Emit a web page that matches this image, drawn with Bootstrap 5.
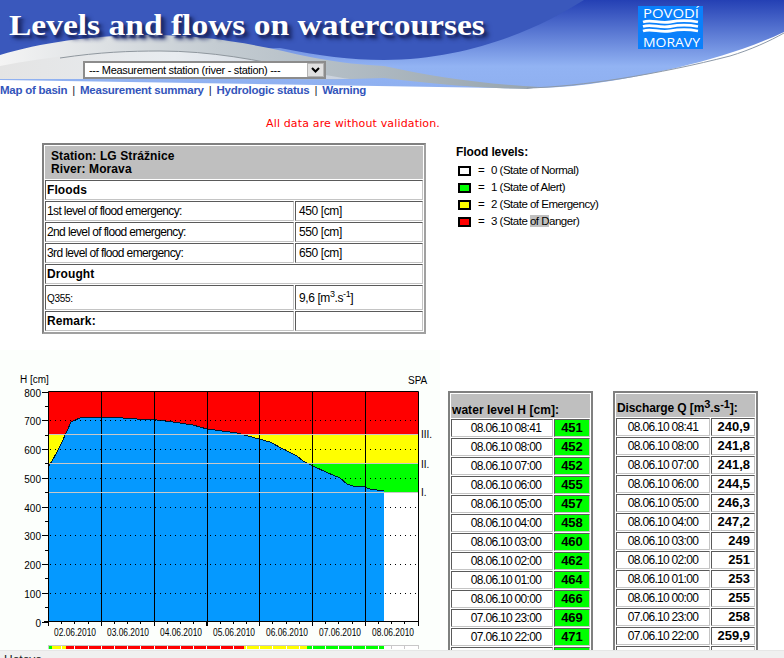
<!DOCTYPE html>
<html lang="en">
<head>
<meta charset="UTF-8">
<meta name="viewport" content="width=device-width, initial-scale=1.0">
<title>Levels and flows on watercourses</title>
<link href="https://cdn.jsdelivr.net/npm/bootstrap@5.3.0/dist/css/bootstrap.min.css" rel="stylesheet">
<style>
html, body { height: 100%; overflow: hidden; }
body { background: #fff; color: #000; font-family: "Liberation Sans", Arial, sans-serif; font-size: 12px; }
.page-wrap { position: relative; height: 658px; overflow: hidden; }
.banner-art { position: absolute; left: 0; top: 0; z-index: 0; }
.banner-flow { position: relative; z-index: 1; height: 81px; }
.banner-title { font-family: "Liberation Serif", "Times New Roman", serif; font-weight: 700; font-size: 30px; line-height: 34px; color: #fff; margin: 0; padding: 8px 0 0 8px; text-shadow: 2px 3px 2px #1c2a6a, 4px 4px 4px #1c2a6a; white-space: nowrap; transform: scaleX(1.117); transform-origin: left top; }
.station-pick { width: 243px; height: 18px; margin: 19px 0 0 83px; padding: 0 18px 0 4px; border: 2px solid #8c8c8c; border-radius: 0; font-family: "Liberation Sans", Arial, sans-serif; font-size: 11px; letter-spacing: -.3px; line-height: 14px; color: #000; background-color: #fff; background-repeat: no-repeat; background-size: 17px 14px; background-position: right 0 center; background-image: url("data:image/svg+xml,%3Csvg xmlns='http://www.w3.org/2000/svg' viewBox='0 0 17 14'%3E%3Crect width='17' height='14' fill='%23b4b4b4'/%3E%3Crect x='1' y='1' width='15' height='12' fill='%23e0e0e0'/%3E%3Cpath d='M5 5l3.500 3.500L12 5' fill='none' stroke='%23000' stroke-width='2'/%3E%3C/svg%3E"); }
.top-links { position: relative; z-index: 1; height: 18px; line-height: 18px; font-family: "Liberation Sans", Arial, sans-serif; font-size: 11.500px; font-weight: 700; letter-spacing: -.25px; white-space: nowrap; color: #223; }
.top-links a { color: #3355bb; text-decoration: none; }
.top-links .sep { display: inline-block; margin: 0 5px; font-weight: 400; }
.no-valid { position: relative; font-family: "DejaVu Sans", Verdana, sans-serif; font-size: 11px; letter-spacing: .15px; color: #f00; text-align: left; padding-left: 266px; height: 18px; line-height: 18px; margin-top: 16px; }

.old-table { border-collapse: separate; border-spacing: 1px; border: 1px solid #808080; background: #fff; }
.old-table td { border: 1px solid; border-color: #5a5a5a #c4c4c4 #c4c4c4 #5a5a5a; padding: 0 0 0 1px; vertical-align: middle; letter-spacing: -.62px; font-size: 12px; }
.old-table td.head-cell { background: #bfbfbf; border-color: #bfbfbf; font-weight: 700; letter-spacing: .1px; vertical-align: middle; }
.old-table td.sect-cell { font-weight: 700; letter-spacing: .1px; }

.info-zone { margin-top: 10px; height: 207px; }
.station-table { width: 384px; margin-left: 42px; border-width: 2px; border-color: #808080 #a0a0a0 #a0a0a0 #808080; }
.station-table td { height: 20px; }
.station-table .head-cell { height: 33px; padding-left: 5px; line-height: 13px; }
.station-table .val-col { width: 128px; padding-left: 3px; letter-spacing: -.4px; }
.station-table .tall-row td { height: 25px; }
.small-sub { font-size: 10px; letter-spacing: -.3px; }
.flood-legend { margin-left: 30px; padding-top: 2px; font-size: 11.500px; letter-spacing: -.5px; }
.flood-legend .leg-title { font-weight: 700; font-size: 12px; letter-spacing: -.1px; line-height: 15px; margin-bottom: 2px; }
.leg-row { height: 17px; line-height: 17px; white-space: nowrap; padding-left: 2px; }
.leg-swatch { width: 13px; height: 10px; border: 2px solid #000; flex: none; }
.leg-eq { width: 20px; text-align: center; flex: none; }
.leg-picked { background: #c0c0c0; }

.lower-zone { height: 307px; }
.chart-box { width: 440px; height: 307px; background: #fcfffc; flex: none; }
.chart-box svg { display: block; }
.chart-box text { font-family: "Liberation Sans", Arial, sans-serif; font-size: 10px; fill: #000; }
.reading-col { padding-top: 41px; margin-left: 8px; }
.reading-table { border-width: 2px; border-color: #808080; width: 145px; }
.reading-table td { height: 18px; line-height: 14px; font-size: 12px; text-align: center; letter-spacing: -.7px; padding: 0 0 0 8px; white-space: nowrap; }
.reading-table td.head-cell { height: 24px; text-align: left; padding-left: 0; font-size: 12px; letter-spacing: .05px; vertical-align: bottom; white-space: nowrap; }
.reading-table td.num-cell { width: 36px; padding-left: 0; font-weight: 700; font-size: 13px; letter-spacing: 0; }
.reading-table td.level-ok { background: #00ff00; }
.flow-table { margin-left: 20px; }
.flow-table td { padding-left: 0; }
.flow-table td.flow-cell { width: 44px; text-align: right; padding-right: 4px; }
.flow-table td.head-cell { height: 23px; line-height: 12px; padding-bottom: 2px; letter-spacing: -.1px; }
.flow-table td.head-cell sup { font-size: 11px; top: -.4em; }

.status-strip { position: absolute; left: 0; right: 0; top: 650px; height: 8px; background: #f0f0f0; border-top: 1px solid #e6e6e6; overflow: hidden; font-size: 12px; line-height: 14px; padding: 2px 0 0 4px; color: #222; }
</style>
</head>
<body>
<div class="page-wrap">
    <svg class="banner-art" width="784" height="92" viewBox="0 0 784 92">
        <defs>
            <linearGradient id="skyGrad" x1="0" y1="0" x2="0" y2="1">
                <stop offset="0" stop-color="#2440b4"/>
                <stop offset=".75" stop-color="#92b3f3"/>
                <stop offset="1" stop-color="#8fb0f0"/>
            </linearGradient>
            <linearGradient id="swooshGrad" x1="0" y1="0" x2="1" y2="0">
                <stop offset="0" stop-color="#f4f4f4"/>
                <stop offset=".4" stop-color="#c4ccd2"/>
                <stop offset="1" stop-color="#96a4ae"/>
            </linearGradient>
            <linearGradient id="lowGrad" x1="0" y1="0" x2="1" y2="0">
                <stop offset="0" stop-color="#e4e4e4"/>
                <stop offset=".5" stop-color="#e8ecf0"/>
                <stop offset="1" stop-color="#c8d0dc"/>
            </linearGradient>
        </defs>
        <path d="M0 0H784V32C730 58 650 76 590 84C560 88 530 89 500 88L0 80Z" fill="url(#skyGrad)"/>
        <path d="M0 0H584C540 28 470 60 384 60C350 60 320 56 280 48L0 60Z" fill="#3a58bc"/>
        <path d="M0 55C40 43 90 35 150 35C215 35 265 47 310 57C340 63 365 65 384 66C430 76 480 84 540 87L527 89C470 88 420 82 384 78C340 80 300 79 280 79H0Z" fill="url(#swooshGrad)"/>
        <path d="M0 79V66C50 56 105 51 160 51C210 51 260 60 300 70C320 74 335 77 350 79Z" fill="url(#lowGrad)"/>
        <path d="M60 58C100 52 130 51 160 51C210 51 260 60 300 70" fill="none" stroke="#8f979e" stroke-width="1"/>
        <path d="M527 88C580 87 660 74 730 56C750 50 770 41 784 33" fill="none" stroke="#8d99a8" stroke-width="1"/>
        <rect x="638" y="6" width="65" height="43" fill="#0a80fb"/>
        <text x="643" y="18" textLength="56" lengthAdjust="spacingAndGlyphs" font-family="Open Sans" font-size="12.500" fill="#fff">POVODÍ</text>
        <path d="M643 22C652 19 659 24 670 22C680 20 688 20 698 22M643 26.500C652 23.500 659 28.500 670 26.500C680 24.500 688 24.500 698 26.500M643 31C652 28 659 33 670 31C680 29 688 29 698 31" fill="none" stroke="#fff" stroke-width="2.800"/>
        <text x="643" y="47" textLength="57" lengthAdjust="spacingAndGlyphs" font-family="Open Sans" font-size="12.500" fill="#fff">MORAVY</text>
    </svg>

    <div class="banner-flow">
        <h1 class="banner-title">Levels and flows on watercourses</h1>
        <select class="form-select station-pick">
            <option>--- Measurement station (river - station) ---</option>
        </select>
    </div>

    <div class="top-links">
        <a href="#">Map of basin</a><span class="sep">|</span><a href="#">Measurement summary</a><span class="sep">|</span><a href="#">Hydrologic status</a><span class="sep">|</span><a href="#">Warning</a>
    </div>

    <div class="no-valid">All data are without validation.</div>

    <div class="info-zone d-flex align-items-start">
        <table class="old-table station-table">
            <tr><td class="head-cell" colspan="2">Station: LG Strážnice<br>River: Morava</td></tr>
            <tr><td class="sect-cell" colspan="2">Floods</td></tr>
            <tr><td>1st level of flood emergency:</td><td class="val-col">450 [cm]</td></tr>
            <tr><td>2nd level of flood emergency:</td><td class="val-col">550 [cm]</td></tr>
            <tr><td>3rd level of flood emergency:</td><td class="val-col">650 [cm]</td></tr>
            <tr><td class="sect-cell" colspan="2">Drought</td></tr>
            <tr class="tall-row"><td><span class="small-sub">Q355:</span></td><td class="val-col">9,6 [m<sup>3</sup>.s<sup>-1</sup>]</td></tr>
            <tr><td class="sect-cell">Remark:</td><td class="val-col"></td></tr>
        </table>
        <div class="flood-legend">
            <div class="leg-title">Flood levels:</div>
            <div class="leg-row d-flex align-items-center"><span class="leg-swatch" style="background:#fff"></span><span class="leg-eq">=</span><span>0 (State of Normal)</span></div>
            <div class="leg-row d-flex align-items-center"><span class="leg-swatch" style="background:#0f0"></span><span class="leg-eq">=</span><span>1 (State of Alert)</span></div>
            <div class="leg-row d-flex align-items-center"><span class="leg-swatch" style="background:#ff0"></span><span class="leg-eq">=</span><span>2 (State of Emergency)</span></div>
            <div class="leg-row d-flex align-items-center"><span class="leg-swatch" style="background:#f00"></span><span class="leg-eq">=</span><span>3 (State <span class="leg-picked">of D</span>anger)</span></div>
        </div>
    </div>

    <div class="lower-zone d-flex">
        <div class="chart-box">
            <svg id="chart" width="440" height="307" viewBox="0 351 440 307">
                <rect x="48" y="392.500" width="370" height="43" fill="#f00"/>
                <rect x="48" y="435" width="370" height="29" fill="#ff0"/>
                <rect x="48" y="464" width="370" height="29" fill="#0f0"/>
                <rect x="48" y="493" width="370" height="129" fill="#fff"/>
                <path id="water" fill="#0599ff" stroke="none" shape-rendering="crispEdges"/>
                <path id="waterEdge" fill="none" stroke="#001a30" stroke-width="1" shape-rendering="crispEdges"/>
                <g id="gridPart"></g>
                <text x="20" y="384">H [cm]</text>
                <text x="408" y="385">SPA</text>
                <text x="421" y="439">III.</text>
                <text x="421" y="469">II.</text>
                <text x="421" y="497">I.</text>
            </svg>
        </div>
        <div class="reading-col d-flex align-items-start">
            <table class="old-table reading-table">
                <tr><td class="head-cell" colspan="2"><b>water level H [cm]:</b></td></tr>
                <tr><td>08.06.10 08:41</td><td class="num-cell level-ok">451</td></tr>
                <tr><td>08.06.10 08:00</td><td class="num-cell level-ok">452</td></tr>
                <tr><td>08.06.10 07:00</td><td class="num-cell level-ok">452</td></tr>
                <tr><td>08.06.10 06:00</td><td class="num-cell level-ok">455</td></tr>
                <tr><td>08.06.10 05:00</td><td class="num-cell level-ok">457</td></tr>
                <tr><td>08.06.10 04:00</td><td class="num-cell level-ok">458</td></tr>
                <tr><td>08.06.10 03:00</td><td class="num-cell level-ok">460</td></tr>
                <tr><td>08.06.10 02:00</td><td class="num-cell level-ok">462</td></tr>
                <tr><td>08.06.10 01:00</td><td class="num-cell level-ok">464</td></tr>
                <tr><td>08.06.10 00:00</td><td class="num-cell level-ok">466</td></tr>
                <tr><td>07.06.10 23:00</td><td class="num-cell level-ok">469</td></tr>
                <tr><td>07.06.10 22:00</td><td class="num-cell level-ok">471</td></tr>
                <tr><td></td><td class="num-cell level-ok"></td></tr>
            </table>
            <table class="old-table reading-table flow-table">
                <tr><td class="head-cell" colspan="2"><b>Discharge Q [m<sup>3</sup>.s<sup>-1</sup>]:</b></td></tr>
                <tr><td>08.06.10 08:41</td><td class="num-cell flow-cell">240,9</td></tr>
                <tr><td>08.06.10 08:00</td><td class="num-cell flow-cell">241,8</td></tr>
                <tr><td>08.06.10 07:00</td><td class="num-cell flow-cell">241,8</td></tr>
                <tr><td>08.06.10 06:00</td><td class="num-cell flow-cell">244,5</td></tr>
                <tr><td>08.06.10 05:00</td><td class="num-cell flow-cell">246,3</td></tr>
                <tr><td>08.06.10 04:00</td><td class="num-cell flow-cell">247,2</td></tr>
                <tr><td>08.06.10 03:00</td><td class="num-cell flow-cell">249</td></tr>
                <tr><td>08.06.10 02:00</td><td class="num-cell flow-cell">251</td></tr>
                <tr><td>08.06.10 01:00</td><td class="num-cell flow-cell">253</td></tr>
                <tr><td>08.06.10 00:00</td><td class="num-cell flow-cell">255</td></tr>
                <tr><td>07.06.10 23:00</td><td class="num-cell flow-cell">258</td></tr>
                <tr><td>07.06.10 22:00</td><td class="num-cell flow-cell">259,9</td></tr>
                <tr><td></td><td class="num-cell flow-cell"></td></tr>
            </table>
        </div>
    </div>

    <div class="status-strip">Hotovo</div>
</div>

<script src="https://cdn.jsdelivr.net/npm/bootstrap@5.3.0/dist/js/bootstrap.bundle.min.js"></script>
<script>
    // water line, measured from the picture (x, y in page pixels)
    const line = [[48,468],[52,462],[57,453],[62,443],[67,432],[71,423],[75,421],[80,419],[87,418],[93,418.500],[123,419],[137,420],[157,421],[173,423],[193,426],[207,430],[222,432],[237,434],[259,440],[270,443],[283,450],[297,457],[303,462],[313,467],[328,474],[340,479],[347,485],[353,487],[362,487],[370,490],[384,492]];
    const pts = line.map(p => p.join(',')).join(' L');
    document.getElementById('water').setAttribute('d', 'M48,622 L' + pts + ' L384,622Z');
    document.getElementById('waterEdge').setAttribute('d', 'M' + pts);

    let out = '';
    const yOf = v => 622.5 - v * 0.2875;

    // dotted level lines
    for (let v = 100; v <= 700; v += 100) {
        const y = Math.round(yOf(v)) + .5;
        out += `<path d="M50 ${y}H418" stroke="#000" stroke-dasharray="1 4"/>`;
    }
    // day lines
    [101.500, 154.500, 207.500, 259.500, 312.500, 365.500].forEach(x => {
        out += `<path d="M${x} 392V627" stroke="#000"/>`;
    });
    // flood level lines
    [435.500, 464.500, 493.500].forEach(y => {
        out += `<path d="M48 ${y}H418" stroke="#c8c8c8"/>`;
    });
    // frame
    out += '<path d="M48.500 622V392.500H418.500V627M44 622.500H418" fill="none" stroke="#000"/>';
    // y axis ticks + labels
    for (let v = 0; v <= 800; v += 50) {
        const y = Math.round(yOf(v)) + .5;
        const big = v % 100 === 0;
        out += `<path d="M${big ? 42 : 45} ${y}H48" stroke="#000"/>`;
        if (big) out += `<text x="41" y="${y + 4}" text-anchor="end">${v}</text>`;
    }
    // x axis ticks
    for (let i = 0; i <= 28; i++) {
        const x = Math.round(48 + i * 13.2) + .5;
        out += `<path d="M${x} 622V${i % 4 === 0 ? 627 : 625}" stroke="#000"/>`;
    }
    ['02','03','04','05','06','07','08'].forEach((d, i) => {
        out += `<text x="${54 + i * 53}" y="637" textLength="42" lengthAdjust="spacingAndGlyphs">${d}.06.2010</text>`;
    });
    // state strip under the chart
    const strip = [[49,52,'#0f0'],[52,66,'#ff0'],[66,244,'#f00'],[244,307,'#ff0'],[307,384,'#0f0'],[384,418,'#fff']];
    out += '<rect x="48" y="646" width="371" height="4" fill="#c8c8c8"/>';
    strip.forEach(s => {
        out += `<rect x="${s[0]}" y="647" width="${s[1] - s[0]}" height="3" fill="${s[2]}"/>`;
    });
    for (let i = 1; i < 28; i++) {
        const x = Math.round(48 + i * 13.2) + .5;
        out += `<path d="M${x} 647V650" stroke="${x > 384 ? '#c8c8c8' : '#fff'}"/>`;
    }
    document.getElementById('gridPart').innerHTML = out;
</script>
</body>
</html>
